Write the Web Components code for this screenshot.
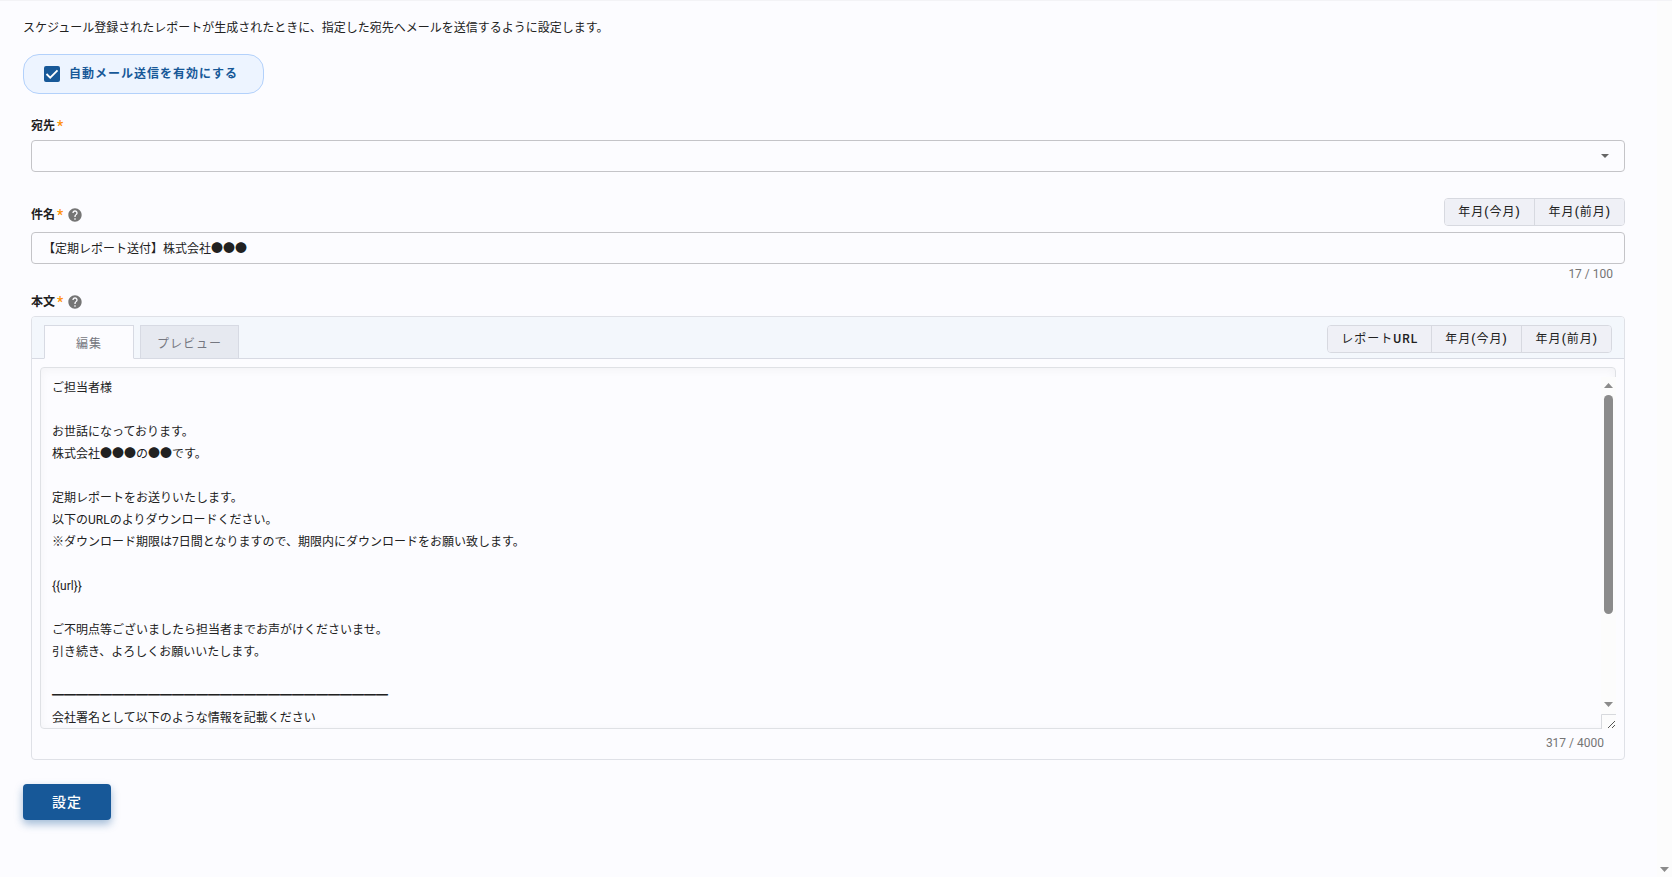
<!DOCTYPE html>
<html lang="ja">
<head>
<meta charset="utf-8">
<title>自動メール送信設定</title>
<style>
html { height: 100%; }
body {
  margin: 0;
  min-height: 100%;
  background: #fcfcff;
  color: #212121;
  font: 12px/22px Roboto, "Noto Sans CJK JP", sans-serif;
}
</style>
</head>
<body>
<mail-settings></mail-settings>
<script>
const define = (name, html, setup) => {
  const template = document.createElement('template');
  template.innerHTML = html;
  customElements.define(name, class extends HTMLElement {
    constructor() {
      super();
      this.attachShadow({ mode: 'open' }).append(template.content.cloneNode(true));
    }
    connectedCallback() {
      if (setup) setup(this, this.shadowRoot);
    }
  });
};

/* Row with the field's label on the left and its insert buttons on the right */
define('field-head', `
<style>
  :host { display: flex; align-items: flex-end; justify-content: space-between; }
  .label { display: flex; align-items: center; }
  .star { color: #ff8f00; margin-left: 2px; font-weight: 500; font-size: 14px; }
  ::slotted(label) { font-weight: 700; }
  svg { display: none; width: 16px; height: 16px; margin-left: 4px; fill: #757575; }
  :host([help]) svg { display: block; }
</style>
<div class="label"><slot></slot><span class="star">*</span>
  <svg viewBox="0 0 24 24" aria-hidden="true"><path d="M12 2C6.48 2 2 6.48 2 12s4.48 10 10 10 10-4.480 10-10S17.520 2 12 2zm1 17h-2v-2h2v2zm2.070-7.750-.9.920C13.450 12.900 13 13.500 13 15h-2v-.5c0-1.100.450-2.100 1.170-2.830l1.240-1.260c.370-.360.590-.860.590-1.410 0-1.100-.9-2-2-2s-2 .9-2 2H8c0-2.210 1.790-4 4-4s4 1.790 4 4c0 .880-.360 1.680-.930 2.250z"/></svg>
</div>
<slot name="tools"></slot>`);

/* Joined group of buttons; one button for each comma-separated item */
define('insert-buttons', `
<style>
  :host { display: flex; border: 1px solid #d7d9e0; border-radius: 4px; overflow: hidden; }
  button {
    height: 26px; padding: 0 13px; border: 0; margin: 0;
    background: #eff0f6; color: #212121; cursor: pointer;
    font: 400 12px/24px Roboto, "Noto Sans CJK JP", sans-serif; letter-spacing: 1px;
  }
  button + button { border-left: 1px solid #d7d9e0; }
  button:last-child { padding-left: 14px; }
  .latin { font-weight: 500; }
</style>`, (host, root) => {
  for (const text of host.getAttribute('items').split(',')) {
    const button = document.createElement('button');
    button.type = 'button';
    button.innerHTML = text.replace(/[A-Z()]+/g, '<span class="latin">$&</span>');
    root.append(button);
  }
});

define('enable-toggle', `
<style>
  :host { display: flex; }
  label {
    display: flex; align-items: center; gap: 9px; box-sizing: border-box;
    height: 40px; padding: 0 25px 0 20px;
    border: 1px solid #b3d1fb; border-radius: 16px;
    background: #edf4ff; color: #175898; font-weight: 700; letter-spacing: 1px; cursor: pointer;
  }
  .box { display: grid; }
  .box > * { grid-area: 1 / 1; }
  input {
    appearance: none; width: 16px; height: 16px; margin: 0;
    border: 2px solid #175898; border-radius: 2px;
  }
  input:checked { background: #175898; }
  svg { display: none; width: 16px; height: 16px; pointer-events: none; }
  input:checked + svg { display: block; }
</style>
<label><span class="box"><input type="checkbox" checked><svg viewBox="0 0 16 16" aria-hidden="true"><path d="M2.500 8 6.200 11.700 13.500 4.400" fill="none" stroke="#fff" stroke-width="1.800"/></svg></span><slot></slot></label>`);

define('scroll-bar', `
<style>
  :host { display: flex; flex-direction: column; align-items: center; box-sizing: border-box; width: 15px; padding: 6px 0 7px; background: #fcfcfc; }
  svg { width: 9px; height: 5px; fill: #8b8b8b; }
  .track { flex: 1; align-self: stretch; margin: 7px 3px; }
  .thumb { height: 73%; border-radius: 5px; background: #8b8b8b; }
  :host([bare]) .thumb, :host([bare]) .up { visibility: hidden; }
</style>
<svg class="up" viewBox="0 0 9 5"><path d="M0 5 4.500 0 9 5z"/></svg>
<div class="track"><div class="thumb"></div></div>
<svg viewBox="0 0 9 5"><path d="M0 0 4.500 5 9 0z"/></svg>`);

define('body-editor', `
<style>
  :host { display: block; border: 1px solid #dfe1e7; border-radius: 4px; overflow: hidden; }
  header {
    display: flex; align-items: flex-start; justify-content: space-between; box-sizing: border-box;
    height: 42px; padding: 8px 12px 0; background: #f3f7fc; border-bottom: 1px solid #d7dae3;
  }
  .tabs { display: flex; gap: 6px; }
  .tabs button {
    height: 34px; padding: 4px 16px 0; border: 1px solid #d7dae3; margin: 0;
    background: #e6e9f0; color: #757780;
    font: 400 12px/24px Roboto, "Noto Sans CJK JP", sans-serif; letter-spacing: 1px;
  }
  .tabs button[aria-selected="true"] { min-width: 90px; background: #fcfcff; border-bottom-color: #fcfcff; }
  .wrap { position: relative; margin: 8px; display: grid; }
  textarea {
    box-sizing: border-box; width: 100%; height: 362px; padding: 9px 28px 8px 11px; margin: 0;
    border: 1px solid #dfe1e5; border-radius: 4px; outline: 0; resize: none;
    overflow: auto; scrollbar-width: none;
    background: transparent; box-shadow: inset 0 2px 10px #0000000a; color: #212121;
    font: 12px/22px Roboto, "Noto Sans CJK JP", sans-serif;
  }
  .side { position: absolute; top: 10px; right: 0; bottom: 0; width: 15px; display: flex; flex-direction: column; }
  scroll-bar { flex: 1; }
  .grip { width: 15px; height: 15px; background: #fcfcfc; }
  .count { text-align: right; padding: 0 20px 8px 0; margin-top: -2px; line-height: 16px; color: #757575; }
</style>
<header>
  <div class="tabs" role="tablist"><button type="button" role="tab" aria-selected="true">編集</button><button type="button" role="tab" aria-selected="false">プレビュー</button></div>
  <insert-buttons items="レポートURL,年月(今月),年月(前月)"></insert-buttons>
</header>
<div class="wrap">
<textarea aria-label="本文">ご担当者様

お世話になっております。
株式会社●●●の●●です。

定期レポートをお送りいたします。
以下のURLのよりダウンロードください。
※ダウンロード期限は7日間となりますので、期限内にダウンロードをお願い致します。

{{url}}

ご不明点等ございましたら担当者までお声がけくださいませ。
引き続き、よろしくお願いいたします。

━━━━━━━━━━━━━━━━━━━━━━━━━━━━
会社署名として以下のような情報を記載ください</textarea>
<div class="side" aria-hidden="true"><scroll-bar></scroll-bar>
<svg class="grip" viewBox="0 0 15 15"><path d="M.5 15V.5H15" fill="none" stroke="#d7d9dd"/><path d="M7 14 14 7M11 14 14 11" fill="none" stroke="#555"/></svg></div>
</div>
<div class="count">317 / 4000</div>`);

define('mail-settings', `
<style>
  :host { display: block; position: relative; box-sizing: border-box; min-height: 100vh; padding: 16px 39px 16px 23px; border-top: 1px solid #f3f3f6; }
  p { margin: 0 0 15px; line-height: 22px; }
  form { padding: 0 8px; }
  field-head { height: 22px; }
  .to { margin-top: 21px; margin-bottom: 3px; }
  .subject { margin-top: 26px; height: 28px; margin-bottom: 6px; }
  .body { margin-bottom: 3px; margin-top: 9px; }
  select, input {
    appearance: none; display: block; box-sizing: border-box; width: 100%; height: 32px; margin: 0;
    padding: 0 11px 2px; border: 1px solid #c4c4c8; border-radius: 4px; outline: 0;
    background: transparent; color: #212121; font: 12px/22px Roboto, "Noto Sans CJK JP", sans-serif;
  }
  .pick { display: grid; align-items: center; }
  .pick > * { grid-area: 1 / 1; }
  .pick svg { justify-self: end; width: 8px; height: 4px; margin-right: 16px; fill: #666; pointer-events: none; }
  .count { text-align: right; padding-right: 12px; line-height: 16px; margin-top: 2px; color: #757575; }
  .save {
    display: block; margin: 24px 0 0; height: 36px; min-width: 88px; padding: 0 16px; border: 0; border-radius: 4px;
    background: #175898; color: #fff; box-shadow: 0 4px 8px #17589866;
    font: 500 14px/24px Roboto, "Noto Sans CJK JP", sans-serif; letter-spacing: 1px;
  }
  .page-bar { position: absolute; right: 0; top: 0; bottom: 0; padding-bottom: 5px; }
</style>
<p>スケジュール登録されたレポートが生成されたときに、指定した宛先へメールを送信するように設定します。</p>
<enable-toggle>自動メール送信を有効にする</enable-toggle>
<form>
  <field-head class="to"><label for="to">宛先</label></field-head>
  <div class="pick"><select id="to"><option></option></select><svg viewBox="0 0 8 4" aria-hidden="true"><path d="M0 0h8L4 4z"/></svg></div>
  <field-head class="subject" help><label for="subject">件名</label><insert-buttons slot="tools" items="年月(今月),年月(前月)"></insert-buttons></field-head>
  <input id="subject" type="text" value="【定期レポート送付】株式会社●●●">
  <div class="count">17 / 100</div>
  <field-head class="body" help><label for="body">本文</label></field-head>
  <body-editor id="body"></body-editor>
</form>
<button class="save" type="button">設定</button>
<scroll-bar class="page-bar" bare aria-hidden="true"></scroll-bar>`);
</script>
</body>
</html>
